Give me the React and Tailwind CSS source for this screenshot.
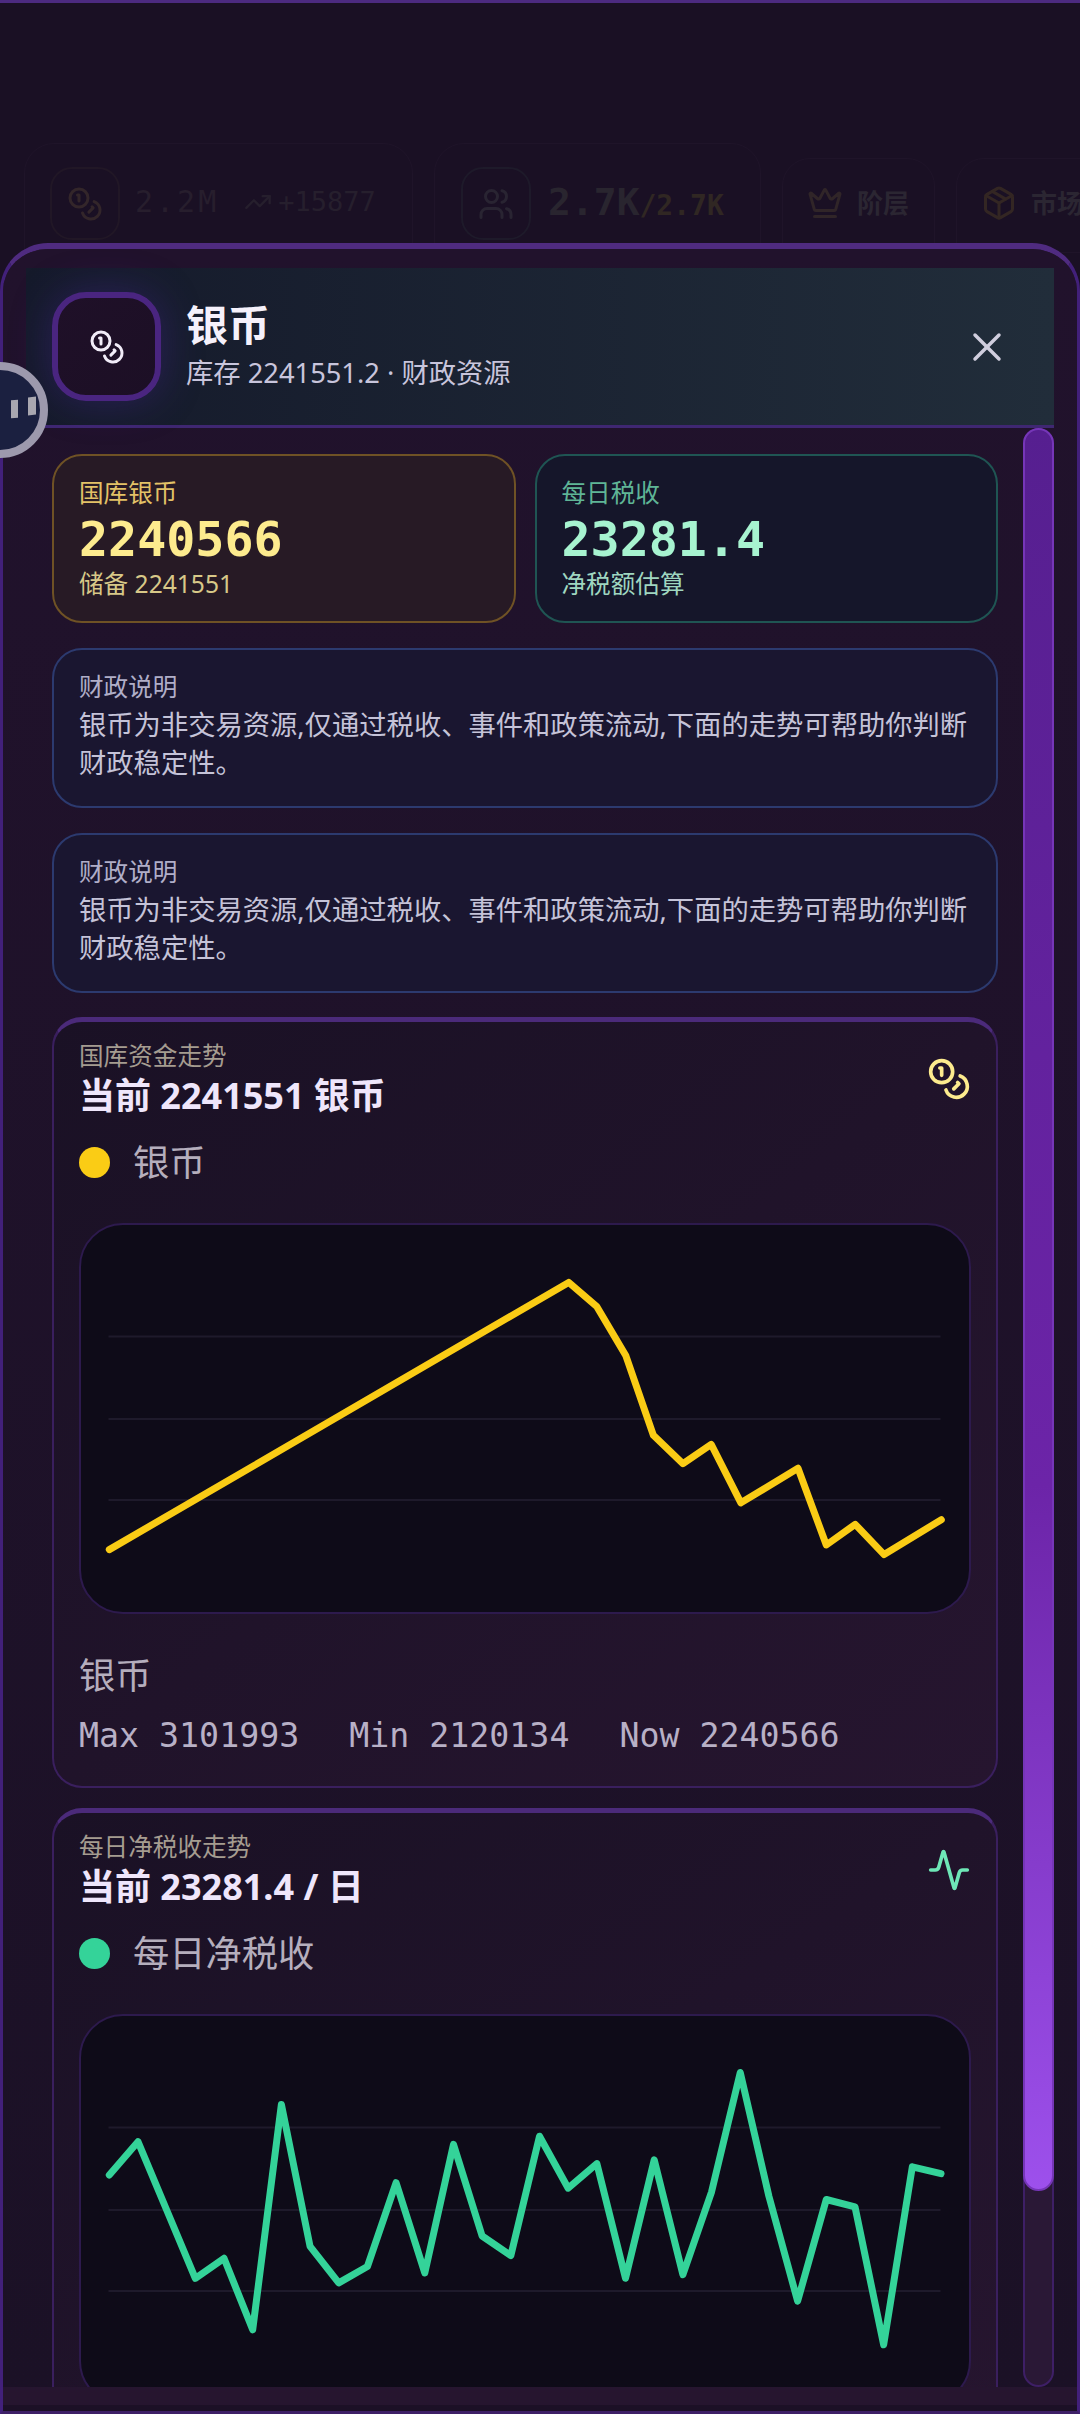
import { Activity, Coins, Crown, Package, TrendingUp, Users, X } from 'lucide-react';

const sans = 'font-["Noto_Sans","Noto_Sans_CJK_SC",sans-serif]';
const mono = 'font-["DejaVu_Sans_Mono","Noto_Sans_CJK_SC",monospace]';

const silverLine = [
  [28.8, 325.6], [172.8, 242], [488.2, 58.4], [516.4, 82.7], [545.4, 131.8], [572.9, 211.3], [602.5, 239.7],
  [630.7, 220.4], [660.4, 278.8], [717.5, 244.3], [745.8, 321], [774.7, 300.3], [803.6, 330.6], [860.8, 295.7],
];

const taxValues = [
  160, 126.7, 195, 263.3, 243.3, 314.8, 89.4, 231.4, 267.9, 251.5, 167.7, 257.9, 129.4, 221, 240.6,
  121.2, 173.2, 148.6, 263.3, 144.9, 259.7, 176.8, 57.5, 181.4, 286.1, 184.5, 191.8, 329.8, 151.8, 158.6,
];
const taxLine = taxValues.map((y, i) => [28.8 + i * 28.68, y]);

function toPoints(line) {
  return line.map(([x, y]) => `${x - 1},${y - 1}`).join(' ');
}

function TrendChart({ line, color }) {
  return (
    <div className="h-[391px] rounded-[44px] border-2 border-[#2d1a4d] bg-[#0e0b18]">
      <svg viewBox="0 0 887 387" className="block h-full w-full">
        {[111.5, 194, 275].map((y) => (
          <line key={y} x1="27" x2="859" y1={y} y2={y} stroke="#1e1a2b" strokeWidth="2" />
        ))}
        <polyline points={toPoints(line)} fill="none" stroke={color} strokeWidth="7" strokeLinejoin="round" strokeLinecap="round" />
      </svg>
    </div>
  );
}

function TrendCard({ label, title, icon, legend, dot, line, color, footer }) {
  return (
    <div className="shrink-0 rounded-[30px] border-x-2 border-b-2 border-t-[5px] border-x-[#3a1f5e] border-b-[#3a1f5e] border-t-[#4b2a7a] bg-gradient-to-br from-[#1a1125] to-[#26152f] px-[25px] pt-[18px] pb-[27px]">
      <div className="flex items-start justify-between">
        <div>
          <div className="text-[24.6px] leading-[32px] text-[#a59c90]">{label}</div>
          <div className="mt-[2px] text-[36px] leading-[44px] font-bold text-[#efe6fb]">{title}</div>
        </div>
        <div className="pt-[17px]">{icon}</div>
      </div>
      <div className="mt-[20px] flex items-center gap-[23px]">
        <span className={`h-[31px] w-[31px] rounded-full ${dot}`} />
        <span className="text-[36.25px] leading-[48px] text-[#b5aebd]">{legend}</span>
      </div>
      <div className="mt-[37px]">
        <TrendChart line={line} color={color} />
      </div>
      {footer}
    </div>
  );
}

function InfoCard() {
  return (
    <div className="rounded-[30px] border-2 border-[#2c3a6f] bg-[#1a1630] px-[25px] pt-[21px] pb-[24px]">
      <div className="text-[24.6px] leading-[32px] text-[#b0aec8]">财政说明</div>
      <p className="mt-[3px] text-[27.3px] leading-[38px] text-[#c5c3d8]">
        银币为非交易资源,仅通过税收、事件和政策流动,下面的走势可帮助你判断财政稳定性。
      </p>
    </div>
  );
}

function BackgroundBar() {
  return (
    <div className="flex items-end gap-[21px] pt-[140px] pl-[24px]">
      <div className="flex h-[110px] w-[389px] shrink-0 gap-[15px] rounded-t-[30px] border border-[#1f1429] px-[25px] pt-[23px]">
        <div className="flex h-[73px] w-[70px] items-center justify-center rounded-[22px] border-2 border-[#211726] text-[#33262a]">
          <Coins size={36} />
        </div>
        <span className={`${mono} mt-[15px] text-[30px] leading-[40px] tracking-[3px] text-[#271e2d]`}>2.2M</span>
        <div className="mt-[15px] ml-[10px] flex h-[40px] items-center gap-[6px] text-[#261f2d]">
          <TrendingUp size={28} />
          <span className={`${mono} text-[27px]`}>+15877</span>
        </div>
      </div>
      <div className="flex h-[110px] w-[327px] shrink-0 gap-[17px] rounded-t-[30px] border border-[#1f1429] px-[26px] pt-[23px]">
        <div className="flex h-[73px] w-[70px] items-center justify-center rounded-[22px] border-2 border-[#1e1a2a] text-[#292432]">
          <Users size={36} />
        </div>
        <div className={`${mono} mt-[12px] flex items-baseline font-bold`}>
          <span className="text-[38px] leading-[46px] text-[#29252f]">2.7K</span>
          <span className="text-[28px] text-[#302723]">/2.7K</span>
        </div>
      </div>
      <div className="flex h-[95px] w-[153px] shrink-0 items-start gap-[14px] rounded-t-[28px] border border-[#1f1429] pt-[26px] pl-[24px] text-[#302528]">
        <Crown size={36} />
        <span className="text-[26px] leading-[36px] font-bold text-[#2b2632]">阶层</span>
      </div>
      <div className="flex h-[95px] w-[200px] shrink-0 items-start gap-[14px] rounded-t-[28px] border border-[#1f1429] pt-[26px] pl-[24px] text-[#332623]">
        <Package size={36} />
        <span className="text-[26px] leading-[36px] font-bold text-[#2b2632]">市场</span>
      </div>
    </div>
  );
}

export default function App() {
  return (
    <div className={`${sans} relative h-[2414px] w-[1080px] overflow-hidden border-t-[3px] border-[#4c2a80] bg-[#1a1024]`}>
      <BackgroundBar />

      {/* modal */}
      <div className="absolute inset-x-0 top-[240px] bottom-0 flex flex-col overflow-hidden rounded-t-[48px] border-x-[3px] border-b-[3px] border-t-[6px] border-x-[#42207a] border-b-[#3d1f66] border-t-[#4f2b80] bg-[#26152f]">
        <div className="flex min-h-0 flex-1 flex-col bg-gradient-to-b from-[#21122c] to-[#1b1126] pt-[19px]">
          <div className="mx-[23px] flex h-[160px] shrink-0 items-center border-b-[3px] border-[#3f2772] bg-gradient-to-r from-[#151a2b] to-[#212d3a] pr-[43px] pl-[26px]">
            <div className="flex h-[109px] w-[109px] shrink-0 items-center justify-center rounded-[34px] border-[6px] border-[#4a2580] bg-gradient-to-br from-[#1f1028] to-[#1c0f25] text-[#f1ecf8] shadow-[0_0_40px_rgba(80,40,170,0.35)]">
              <Coins size={36} />
            </div>
            <div className="ml-[25px] flex-1">
              <div className="text-[42px] leading-[44px] font-bold text-[#f5f1fb]">银币</div>
              <div className="mt-[9px] text-[27.3px] leading-[34px] text-[#c8c5dc]">库存 2241551.2 · 财政资源</div>
            </div>
            <X size={48} strokeWidth={1.75} className="text-[#d0cede]" />
          </div>

          <div className="mx-[23px] flex min-h-0 flex-1 gap-[25px]">
            <div className="flex min-w-0 flex-1 flex-col gap-[25px] overflow-hidden pt-[26px] pl-[26px]">
              <div className="grid shrink-0 grid-cols-2 gap-[19px]">
                <div className="rounded-[30px] border-2 border-[#6f5225] bg-[#271a25] px-[25px] pt-[21px] pb-[21px]">
                  <div className="text-[24.6px] leading-[32px] text-[#e3c267]">国库银币</div>
                  <div className={`${mono} mt-[2px] text-[48.3px] leading-[56px] font-bold text-[#fdeb8e]`}>2240566</div>
                  <div className="mt-[1px] text-[24.6px] leading-[32px] text-[#d8c888]">储备 2241551</div>
                </div>
                <div className="rounded-[30px] border-2 border-[#1f5553] bg-[#15162a] px-[25px] pt-[21px] pb-[21px]">
                  <div className="text-[24.6px] leading-[32px] text-[#5fb596]">每日税收</div>
                  <div className={`${mono} mt-[2px] text-[48.3px] leading-[56px] font-bold text-[#a7f3d0]`}>23281.4</div>
                  <div className="mt-[1px] text-[24.6px] leading-[32px] text-[#9fd6c0]">净税额估算</div>
                </div>
              </div>

              <div className="flex shrink-0 flex-col gap-[25px]">
                <InfoCard />
                <InfoCard />
              </div>

              <div className="-mt-px flex shrink-0 flex-col gap-[20px]">
                <TrendCard
                  label="国库资金走势"
                  title="当前 2241551 银币"
                  icon={<Coins size={44} className="text-[#fdeb8e]" />}
                  legend="银币"
                  dot="bg-[#facc15]"
                  line={silverLine}
                  color="#facc15"
                  footer={
                    <>
                      <div className="mt-[37px] text-[36.25px] leading-[48px] text-[#b5aebd]">银币</div>
                      <div className={`${mono} mt-[14px] flex gap-[50px] text-[33.25px] leading-[46px] text-[#b8b0c6]`}>
                        <span>Max 3101993</span>
                        <span>Min 2120134</span>
                        <span>Now 2240566</span>
                      </div>
                    </>
                  }
                />
                <TrendCard
                  label="每日净税收走势"
                  title="当前 23281.4 / 日"
                  icon={<Activity size={44} className="text-[#6ee7b7]" />}
                  legend="每日净税收"
                  dot="bg-[#34d399]"
                  line={taxLine}
                  color="#34d399"
                />
              </div>
            </div>

            {/* scrollbar */}
            <div className="h-full w-[31px] shrink-0 rounded-full border-2 border-[#3e1f66] bg-[#2a1836]">
              <div className="-mx-[2px] -mt-[2px] h-[1763px] rounded-full border-2 border-[#7636b8] bg-gradient-to-b from-[#561f90] via-[#6c24a8] via-60% to-[#9d50ec]" />
            </div>
          </div>
        </div>
        <div className="h-[18px] shrink-0 bg-[#26152f]" />
        <div className="h-[6px] shrink-0 bg-[#1c1026]" />
      </div>

      {/* floating handle */}
      <div className="absolute top-[359px] -left-[48px] flex h-[96px] w-[96px] items-center justify-end gap-[10px] rounded-full border-[8px] border-[#9d99ad] bg-[#1b2040] pr-[4px]">
        <span className="-mt-[2px] h-[18px] w-[7px] -skew-y-6 bg-[#a9a7b0]" />
        <span className="-mt-[9px] h-[18px] w-[8px] -skew-y-6 bg-[#a9a7b0]" />
      </div>
    </div>
  );
}
